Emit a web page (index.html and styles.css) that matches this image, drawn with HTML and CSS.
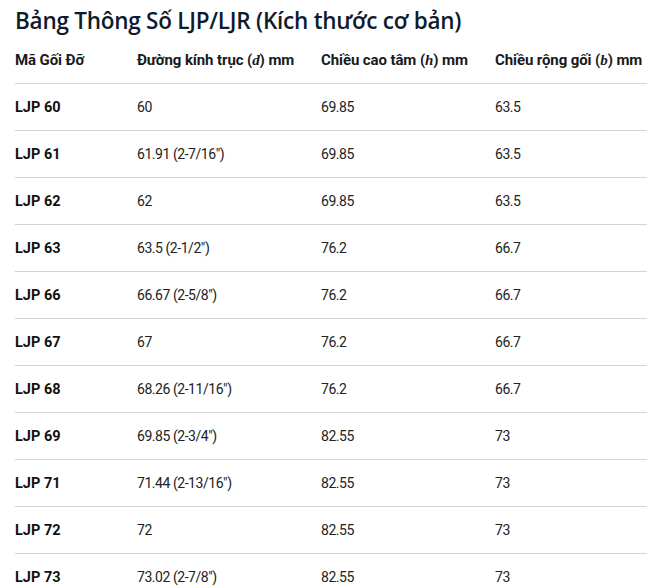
FILE: index.html
```html
<!DOCTYPE html>
<html lang="vi">
<head>
<meta charset="utf-8">
<link rel="stylesheet" href="styles.css">
</head>
<body>
<h2 class="title">Bảng Thông Số LJP/LJR (Kích thước cơ bản)</h2>
<table class="spec">
<colgroup><col class="c1"><col class="c2"><col class="c3"><col class="c4"></colgroup>
<thead>
<tr><th>Mã Gối Đỡ</th><th>Đường kính trục (<i class="m">d</i>) mm</th><th>Chiều cao tâm (<i class="m">h</i>) mm</th><th>Chiều rộng gối (<i class="m">b</i>) mm</th></tr>
</thead>
<tbody>
<tr><td class="code">LJP 60</td><td>60</td><td>69.85</td><td>63.5</td></tr>
<tr><td class="code">LJP 61</td><td>61.91 (2-7/16")</td><td>69.85</td><td>63.5</td></tr>
<tr><td class="code">LJP 62</td><td>62</td><td>69.85</td><td>63.5</td></tr>
<tr><td class="code">LJP 63</td><td>63.5 (2-1/2")</td><td>76.2</td><td>66.7</td></tr>
<tr><td class="code">LJP 66</td><td>66.67 (2-5/8")</td><td>76.2</td><td>66.7</td></tr>
<tr><td class="code">LJP 67</td><td>67</td><td>76.2</td><td>66.7</td></tr>
<tr><td class="code">LJP 68</td><td>68.26 (2-11/16")</td><td>76.2</td><td>66.7</td></tr>
<tr><td class="code">LJP 69</td><td>69.85 (2-3/4")</td><td>82.55</td><td>73</td></tr>
<tr><td class="code">LJP 71</td><td>71.44 (2-13/16")</td><td>82.55</td><td>73</td></tr>
<tr><td class="code">LJP 72</td><td>72</td><td>82.55</td><td>73</td></tr>
<tr><td class="code">LJP 73</td><td>73.02 (2-7/8")</td><td>82.55</td><td>73</td></tr>
</tbody>
</table>
</body>
</html>
```
FILE: styles.css
```css
html, body { margin: 0; padding: 0; background: #fff; }
body { padding: 0 8px 0 15px; font-family: Roboto, "Noto Sans", sans-serif; color: #1f1f1f; }
.title {
  margin: 0;
  padding-top: 5px;
  font-family: "Open Sans", "Noto Sans", sans-serif;
  font-weight: 600;
  font-size: 22.5px;
  line-height: 32px;
  color: #0f1b2d;
  letter-spacing: -0.25px;
}
.spec { border-collapse: collapse; width: 632px; table-layout: fixed; font-size: 14px; letter-spacing: -0.45px; }
.c1 { width: 122px; } .c2 { width: 184px; } .c3 { width: 174px; } .c4 { width: 152px; }
.spec th, .spec td { text-align: left; padding: 0; vertical-align: middle; white-space: nowrap; }
.spec th { height: 46px; font-size: 15px; letter-spacing: -0.1px; font-weight: 700; color: #1a1a1a; border-bottom: 1px solid #d3d3d3; }
.spec td { height: 46px; border-bottom: 1px solid #d3d3d3; color: #222; }
.spec td.code { font-size: 14.5px; font-weight: 700; letter-spacing: 0; color: #111; }
.m { font-family: "Liberation Serif", serif; font-style: italic; font-weight: 700; font-size: 15px; }
```
